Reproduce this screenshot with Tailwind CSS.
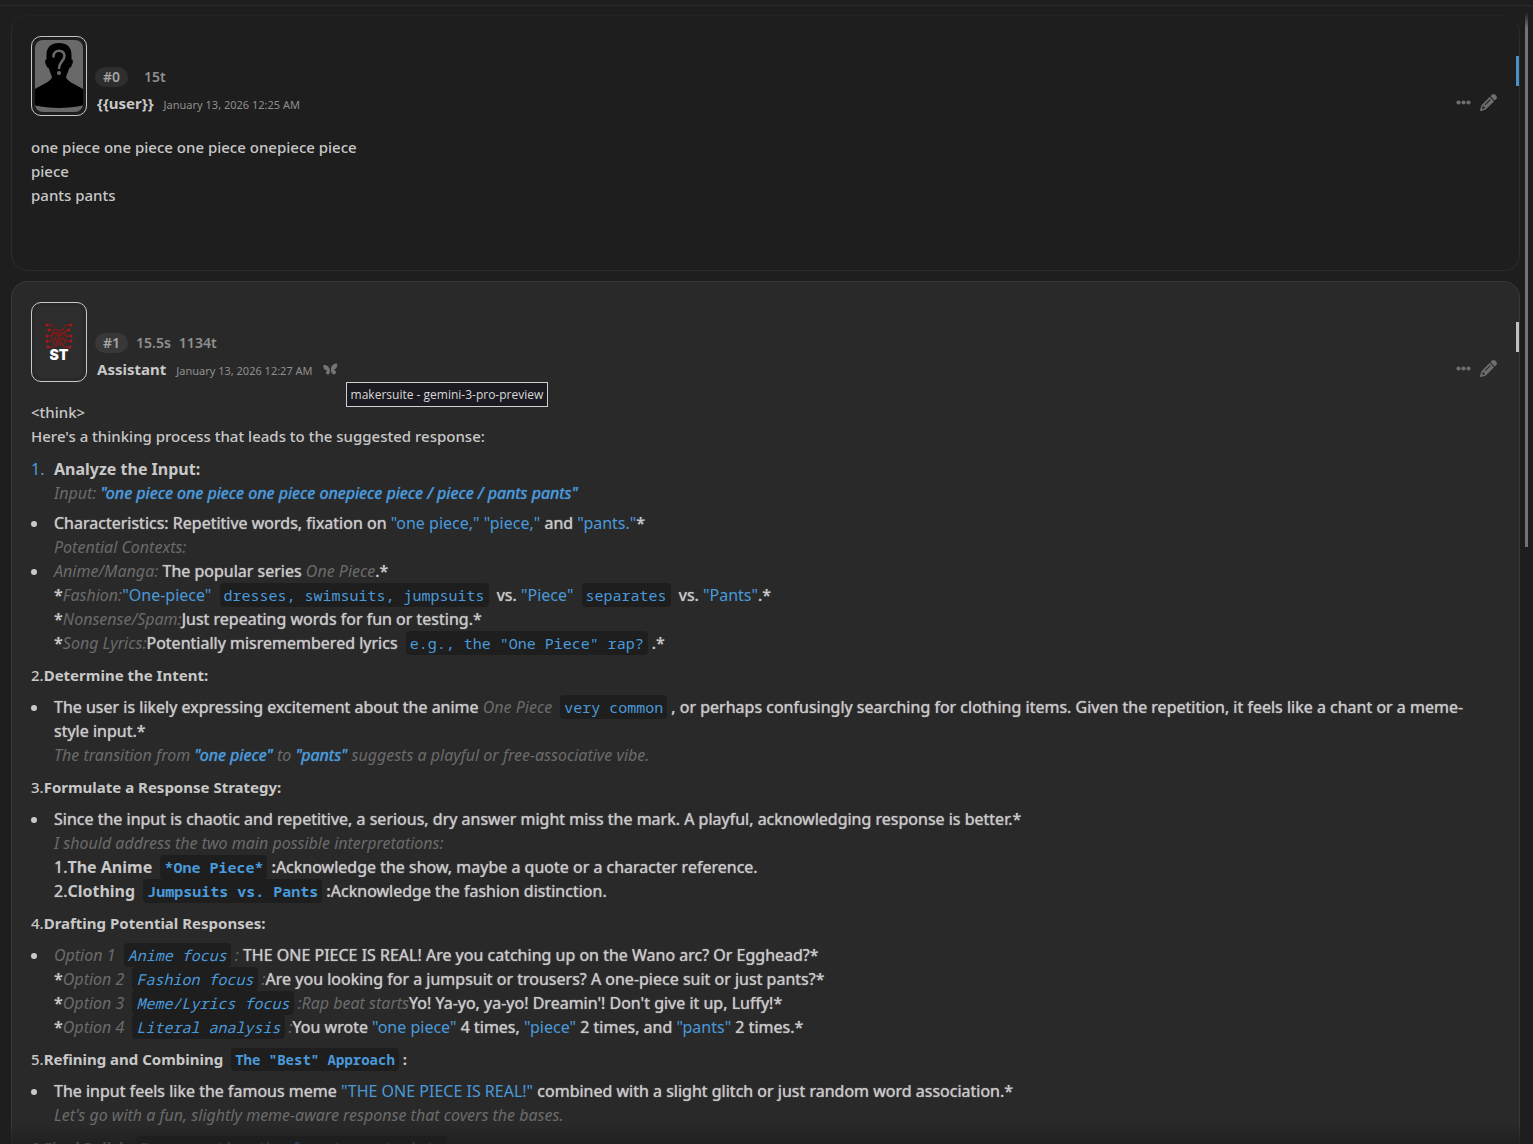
<!DOCTYPE html>
<html lang="en">
<head>
    <meta charset="UTF-8">
    <meta name="viewport" content="width=device-width, initial-scale=1.0">
    <title>Chat</title>
    <script src="https://cdn.jsdelivr.net/npm/@tailwindcss/browser@4"></script>
</head>
<body class="bg-[#1e1e1e] text-[#c8c8c8] font-['Noto_Sans',sans-serif]">
    <div class="relative h-screen overflow-hidden flex flex-col">
        <header class="h-[6px] shrink-0 border-b border-[#2a2a2a]"></header>

        <main id="chat" class="flex-1 min-h-0 overflow-hidden pt-[9px] pl-[11px] pr-[13px]">

            <!-- message 0 -->
            <article class="relative h-64 mb-[10px] px-[19px] py-5 border border-[#2c2c2c] rounded-2xl">
                <div class="absolute right-0 top-10 w-[3px] h-[30px] bg-[#4a90c8]"></div>
                <div class="flex items-end mb-[19px]">
                    <div class="w-14 h-20 p-[3px] border border-[#c8c8c8] rounded-[10px]">
                        <svg class="w-full h-full rounded-lg" viewBox="0 0 48 72">
                            <rect width="48" height="72" fill="#696969"/>
                            <path d="M24 3c8 0 12.500 4 12.500 12v4.500c1.500 0 1.800 2 1 4l-1.500 3.500c-1 .5-1.500 1-2 2-1 3-2 5-3 8 1 4 7 6.500 17 12v16.500c-15 3.200-33 3.200-48 0V49c10-5.500 16-8 17-12-1-3-2-5-3-8-.5-1-1-1.500-2-2l-1.500-3.500c-.8-2-.5-4 1-4V15c0-8 4.500-12 12.500-12z" fill="#000"/>
                            <path d="M18.500 16.500c0-7.500 11-7.500 11-.5 0 5-5.500 6-5.500 12" fill="none" stroke="#696969" stroke-width="2.600" stroke-linecap="round"/>
                            <circle cx="24" cy="33" r="2" fill="#696969"/>
                        </svg>
                    </div>
                    <div class="ml-2 pb-px flex-1">
                        <div class="flex items-center gap-4 text-sm font-semibold text-[#8f8f8f]">
                            <span class="px-2 rounded-full bg-[#2e2e2e] text-[#a5a5a5]">#0</span>
                            <span>15t</span>
                        </div>
                        <div class="flex items-baseline gap-[10px] mt-1 ml-[2px]">
                            <span class="text-[15px] leading-6 font-bold">{{user}}</span>
                            <time class="text-[11px] leading-4 text-[#8f8f8f]">January 13, 2026 12:25 AM</time>
                        </div>
                    </div>
                    <div class="flex items-center gap-2 mr-[3px] mb-[5px] text-[#6e6e6e]">
                        <button aria-label="More actions" class="p-px"><svg class="w-[15px] h-[15px]" viewBox="0 0 15 15" fill="currentColor"><circle cx="2.500" cy="7.500" r="2.100"/><circle cx="7.500" cy="7.500" r="2.100"/><circle cx="12.500" cy="7.500" r="2.100"/></svg></button>
                        <button aria-label="Edit message"><svg class="w-[17px] h-[17px]" viewBox="0 0 512 512" fill="currentColor"><path d="M410.300 231l11.300-11.300-33.900-33.900-62.100-62.100L291.700 89.800l-11.300 11.300-22.600 22.600L58.600 322.900c-10.400 10.400-18 23.300-22.200 37.400L1 480.700c-2.500 8.400-.2 17.500 6.100 23.700s15.300 8.500 23.700 6.100l120.300-35.400c14.100-4.200 27-11.800 37.400-22.200L387.700 253.700 410.300 231zM160 399.400l-9.100 22.700c-4 3.100-8.500 5.400-13.300 6.900L59.400 452l23-78.100c1.400-4.900 3.800-9.400 6.900-13.300l22.700-9.100v32c0 8.800 7.200 16 16 16h32zM362.700 18.700L348.300 33.200 325.700 55.800 314.300 67.100l33.900 33.900 62.100 62.100 33.900 33.900 11.300-11.300 22.600-22.600 14.500-14.500c25-25 25-65.500 0-90.500L453.300 18.700c-25-25-65.500-25-90.500 0zM315.300 186.700l-144 144c-6.200 6.200-16.400 6.200-22.600 0s-6.200-16.400 0-22.600l144-144c6.200-6.200 16.400-6.200 22.600 0s6.200 16.400 0 22.600z"/></svg></button>
                    </div>
                </div>
                <p class="text-[15px] leading-6 font-medium">one piece one piece one piece onepiece piece<br>piece<br>pants pants</p>
            </article>

            <!-- message 1 -->
            <article class="relative px-[19px] py-5 border border-[#383838] rounded-2xl bg-[#292929]">
                <div class="absolute right-0 top-10 w-[3px] h-[30px] bg-[#c0c0c0]"></div>
                <div class="flex items-end mb-[18px]">
                    <div class="w-14 h-20 p-[3px] border border-[#c8c8c8] rounded-[10px]">
                        <svg class="w-full h-full rounded-lg" viewBox="0 0 48 72">
                            <rect width="48" height="72" fill="#2d2d2d"/>
                            <g fill="none" stroke="#9c1515" stroke-width="1">
                                <path d="M12 19h5l4 5M36 19h-5l-4 5M14 24h2l3 3h4M34 24h-2l-3 3h-4M12 30h5l3-3M36 30h-5l-3-3M12 35h6l3-4M36 35h-6l-3-4M14 41h5l3-5M34 41h-5l-3-5"/>
                                <path d="M23 24c-3-1-5 0-5 3-2 2-2 5 0 7 0 4 3 6 5 5V24zM25 24c3-1 5 0 5 3 2 2 2 5 0 7 0 4-3 6-5 5V24zM20 29h3M28 29h-3M20 34h3M28 34h-3"/>
                            </g>
                            <g fill="#ad1717">
                                <circle cx="12" cy="19" r="1.500"/><circle cx="36" cy="19" r="1.500"/>
                                <circle cx="14" cy="24" r="1.500"/><circle cx="34" cy="24" r="1.500"/>
                                <circle cx="12" cy="30" r="1.500"/><circle cx="36" cy="30" r="1.500"/>
                                <circle cx="12" cy="35" r="1.500"/><circle cx="36" cy="35" r="1.500"/>
                                <circle cx="13" cy="41" r="1.500"/><circle cx="35" cy="41" r="1.500"/>
                            </g>
                            <text x="24" y="54" text-anchor="middle" font-family="Inter, sans-serif" font-size="14" font-weight="900" fill="#fff">ST</text>
                        </svg>
                    </div>
                    <div class="ml-2 pb-px flex-1">
                        <div class="flex items-center gap-2 text-sm font-semibold text-[#8f8f8f]">
                            <span class="px-2 rounded-full bg-[#383838] text-[#a5a5a5]">#1</span>
                            <span>15.5s</span>
                            <span>1134t</span>
                        </div>
                        <div class="flex items-baseline gap-[10px] mt-1 ml-[2px]">
                            <span class="text-[15px] leading-6 font-bold">Assistant</span>
                            <time class="text-[11px] leading-4 text-[#8f8f8f]">January 13, 2026 12:27 AM</time>
                            <span class="relative self-center">
                                <svg class="block w-[15px] h-[13px]" viewBox="0 0 15 13" fill="#747474">
                                    <path d="M7 7.500C6.500 4 4 1.500 1 2 0 2.200.2 3.500.5 4.500c.5 2 2 3 4 3-1.500.8-2 2-1.200 3.200.7 1 2 1.300 2.700.3.600-.8 1-2 1-3.500zM8 7.500C7.500 4 9.500.8 13 .5c1.500 0 1.500 1.200 1.200 2.500-.4 2-1.700 3.300-3.700 3.500 1.500.5 2.700 1.500 2.400 3-.3 1.800-2 2.500-3.200 1.500C8.500 10 8 9 8 7.500z"/>
                                </svg>
                                <span role="tooltip" class="absolute left-[23px] top-[19px] z-10 px-1 border border-[#d0d0d0] bg-[#1c1b22] font-['Open_Sans',sans-serif] text-[12px] leading-[23px] text-[#d8d8d8] whitespace-nowrap">makersuite - gemini-3-pro-preview</span>
                            </span>
                        </div>
                    </div>
                    <div class="flex items-center gap-2 mr-[3px] mb-[5px] text-[#6e6e6e]">
                        <button aria-label="More actions" class="p-px"><svg class="w-[15px] h-[15px]" viewBox="0 0 15 15" fill="currentColor"><circle cx="2.500" cy="7.500" r="2.100"/><circle cx="7.500" cy="7.500" r="2.100"/><circle cx="12.500" cy="7.500" r="2.100"/></svg></button>
                        <button aria-label="Edit message"><svg class="w-[17px] h-[17px]" viewBox="0 0 512 512" fill="currentColor"><path d="M410.300 231l11.300-11.300-33.900-33.900-62.100-62.100L291.700 89.800l-11.300 11.300-22.600 22.600L58.600 322.900c-10.400 10.400-18 23.300-22.200 37.400L1 480.700c-2.500 8.400-.2 17.500 6.100 23.700s15.300 8.500 23.700 6.100l120.300-35.400c14.100-4.200 27-11.800 37.400-22.200L387.700 253.700 410.300 231zM160 399.400l-9.100 22.700c-4 3.100-8.500 5.400-13.300 6.900L59.400 452l23-78.100c1.400-4.900 3.800-9.400 6.900-13.300l22.700-9.100v32c0 8.800 7.200 16 16 16h32zM362.700 18.700L348.300 33.200 325.700 55.800 314.300 67.100l33.900 33.900 62.100 62.100 33.900 33.900 11.300-11.300 22.600-22.600 14.500-14.500c25-25 25-65.500 0-90.500L453.300 18.700c-25-25-65.500-25-90.500 0zM315.300 186.700l-144 144c-6.200 6.200-16.400 6.200-22.600 0s-6.200-16.400 0-22.600l144-144c6.200-6.200 16.400-6.200 22.600 0s6.200 16.400 0 22.600z"/></svg></button>
                    </div>
                </div>

                <div class="space-y-2 text-[15px] leading-6 font-medium [&_li]:pl-[23px] [&_li]:pr-5 [&_li]:text-base [&_li]:leading-6 [&_li]:font-normal [&_li]:[text-shadow:0_0_1px_currentColor] [&_li]:before:float-left [&_li]:before:-ml-[23px] [&_ul>li]:before:content-[''] [&_ul>li]:before:mt-[10px] [&_ul>li]:before:size-[6px] [&_ul>li]:before:rounded-full [&_ul>li]:before:bg-[#c8c8c8] [&_em]:text-[#6b6b6b] [&_em]:[text-shadow:none] [&_strong]:[text-shadow:none] [&_code]:[text-shadow:none] [&_q]:text-[#4a9adb] [&_li>q]:[text-shadow:none] [&_q]:before:content-none [&_q]:after:content-none [&_code]:mx-1 [&_code]:px-1 [&_code]:py-[2px] [&_code]:rounded [&_code]:bg-[#1e1e1e] [&_code]:text-[#4a9adb] [&_li_code]:text-[15px] [&_p_code]:text-sm [&_code]:font-['Noto_Sans_Mono','DejaVu_Sans_Mono',monospace]">
                    <p>&lt;think&gt;<br>Here's a thinking process that leads to the suggested response:</p>
                    <ol class="pt-px mb-[6px]">
                        <li class="before:content-['1.'] before:text-[#4a9adb] before:[text-shadow:none]"><strong>Analyze the Input:</strong><br><em>Input: <q class="[text-shadow:0_0_1px_currentColor]">"one piece one piece one piece onepiece piece / piece / pants pants"</q></em></li>
                    </ol>
                    <ul>
                        <li>Characteristics: Repetitive words, fixation on <q>"one piece,"</q> <q>"piece,"</q> and <q>"pants."</q>*<br><em>Potential Contexts:</em></li>
                        <li><em>Anime/Manga:</em> The popular series <em>One Piece</em>.*<br>
                            *<em>Fashion:</em><q>"One-piece"</q> <code>dresses, swimsuits, jumpsuits</code> vs. <q>"Piece"</q> <code>separates</code> vs. <q>"Pants"</q>.*<br>
                            *<em>Nonsense/Spam:</em>Just repeating words for fun or testing.*<br>
                            *<em>Song Lyrics:</em>Potentially misremembered lyrics <code>e.g., the "One Piece" rap?</code>.*</li>
                    </ul>
                    <p>2.<strong>Determine the Intent:</strong></p>
                    <ul>
                        <li>The user is likely expressing excitement about the anime <em>One Piece</em> <code>very common</code>, or perhaps confusingly searching for clothing items. Given the repetition, it feels like a chant or a meme-style input.*<br>
                            <em>The transition from <q class="[text-shadow:0_0_1px_currentColor]">"one piece"</q> to <q class="[text-shadow:0_0_1px_currentColor]">"pants"</q> suggests a playful or free-associative vibe.</em></li>
                    </ul>
                    <p>3.<strong>Formulate a Response Strategy:</strong></p>
                    <ul>
                        <li>Since the input is chaotic and repetitive, a serious, dry answer might miss the mark. A playful, acknowledging response is better.*<br>
                            <em>I should address the two main possible interpretations:</em><br>
                            1.<strong>The Anime <code>*One Piece*</code>:</strong>Acknowledge the show, maybe a quote or a character reference.<br>
                            2.<strong>Clothing <code>Jumpsuits vs. Pants</code>:</strong>Acknowledge the fashion distinction.</li>
                    </ul>
                    <p>4.<strong>Drafting Potential Responses:</strong></p>
                    <ul>
                        <li><em>Option 1 <code>Anime focus</code>:</em> THE ONE PIECE IS REAL! Are you catching up on the Wano arc? Or Egghead?*<br>
                            *<em>Option 2 <code>Fashion focus</code>:</em>Are you looking for a jumpsuit or trousers? A one-piece suit or just pants?*<br>
                            *<em>Option 3 <code>Meme/Lyrics focus</code>:Rap beat starts</em>Yo! Ya-yo, ya-yo! Dreamin'! Don't give it up, Luffy!*<br>
                            *<em>Option 4 <code>Literal analysis</code>:</em>You wrote <q>"one piece"</q> 4 times, <q>"piece"</q> 2 times, and <q>"pants"</q> 2 times.*</li>
                    </ul>
                    <p>5.<strong>Refining and Combining <code>The "Best" Approach</code>:</strong></p>
                    <ul>
                        <li>The input feels like the famous meme <q>"THE ONE PIECE IS REAL!"</q> combined with a slight glitch or just random word association.*<br>
                            <em>Let's go with a fun, slightly meme-aware response that covers the bases.</em></li>
                    </ul>
                    <p>6.<strong>Final Polish <code>Incorporating the format constraints</code>:</strong></p>
                </div>
            </article>
        </main>

        <!-- edge fades and scrollbar thumb -->
        <div class="absolute inset-x-0 top-[6px] h-8 bg-linear-to-b from-[#1e1e1e] to-[#1e1e1e]/0 pointer-events-none"></div>
        <div class="absolute inset-x-0 bottom-0 h-5 bg-linear-to-t from-[#1e1e1e]/80 to-[#1e1e1e]/0 pointer-events-none"></div>
        <div class="absolute right-[5px] top-3 w-[3px] h-[535px] bg-linear-to-b from-[#1e1e1e] to-[#737373] to-[16px]"></div>
    </div>
</body>
</html>
